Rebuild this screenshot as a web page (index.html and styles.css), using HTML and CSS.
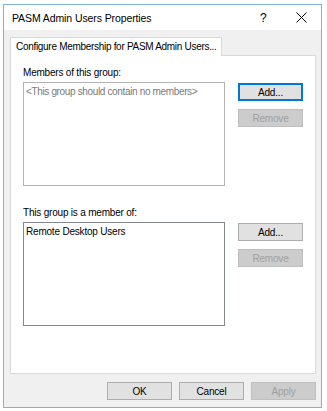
FILE: index.html
```html
<!DOCTYPE html>
<html>
<head>
<meta charset="utf-8">
<link rel="stylesheet" href="styles.css">
</head>
<body>
<div class="window">
  <div class="titlebar">
    <span class="title">PASM Admin Users Properties</span>
    <span class="help">?</span>
    <span class="close"><svg width="11" height="11" viewBox="0 0 11 11"><path d="M0.5 0.5 L10.5 10.5 M10.5 0.5 L0.5 10.5" stroke="#000" stroke-width="1" fill="none"/></svg></span>
  </div>
  <div class="body">
    <div class="tabs"><div class="tab">Configure Membership for PASM Admin Users...</div></div>
    <div class="panel">
      <div class="section">
        <div class="listcol">
          <div class="label">Members of this group:</div>
          <div class="listbox light"><div class="placeholder">&lt;This group should contain no members&gt;</div></div>
        </div>
        <div class="btncol">
          <div class="btn focused">Add...</div>
          <div class="btn disabled">Remove</div>
        </div>
      </div>
      <div class="section second">
        <div class="listcol">
          <div class="label">This group is a member of:</div>
          <div class="listbox dark"><div class="item">Remote Desktop Users</div></div>
        </div>
        <div class="btncol">
          <div class="btn">Add...</div>
          <div class="btn disabled">Remove</div>
        </div>
      </div>
    </div>
    <div class="footer">
      <div class="btn">OK</div>
      <div class="btn">Cancel</div>
      <div class="btn disabled">Apply</div>
    </div>
  </div>
</div>
</body>
</html>
```
FILE: styles.css
```css
html, body {
  margin: 0;
  padding: 0;
  background: #ffffff;
}
body {
  padding: 4px 0 0 3px;
  font-family: "Liberation Sans", Arial, sans-serif;
  font-size: 10px;
  letter-spacing: -0.2px;
  color: #000;
}
.window {
  width: 317px;
  height: 402px;
  border: 1px solid #7fb3de;
  display: flex;
  flex-direction: column;
  background: #f0f0f0;
}
.titlebar {
  height: 25px;
  background: #ffffff;
  display: flex;
  align-items: center;
  padding-left: 8px;
  box-sizing: border-box;
}
.title {
  font-size: 10.5px;
  letter-spacing: -0.1px;
  flex: 1;
}
.help {
  font-size: 12px;
  width: 10px;
  margin-right: 26px;
}
.close {
  width: 11px;
  height: 11px;
  margin-right: 14px;
  display: flex;
}
.body {
  flex: 1;
  display: flex;
  flex-direction: column;
  padding: 7px 5px 7px 6px;
}
.tabs {
  display: flex;
  position: relative;
  z-index: 1;
  margin-bottom: -1px;
}
.tab {
  height: 19px;
  box-sizing: border-box;
  border: 1px solid #d9d9d9;
  border-bottom: none;
  background: #fff;
  padding: 3px 6px 0 5px;
  width: 212px;
  white-space: nowrap;
  letter-spacing: -0.3px;
}
.panel {
  height: 319px;
  box-sizing: border-box;
  border: 1px solid #d9d9d9;
  background: #fff;
  padding: 10px 0 0 12px;
}
.section {
  display: flex;
  gap: 13px;
}
.section.second {
  margin-top: 20px;
}
.listcol {
  display: flex;
  flex-direction: column;
}
.label {
  height: 13px;
  line-height: 13px;
  margin-bottom: 3px;
  white-space: nowrap;
}
.listbox {
  width: 202px;
  height: 104px;
  box-sizing: border-box;
  border: 1px solid #b4b4b4;
  padding: 2px 2px;
  line-height: 13px;
  white-space: nowrap;
}
.listbox.dark {
  border-color: #828790;
}
.placeholder {
  color: #7a7a7a;
  letter-spacing: -0.35px;
}
.btncol {
  display: flex;
  flex-direction: column;
  gap: 8px;
  padding-top: 17px;
}
.btn {
  width: 65px;
  height: 18px;
  box-sizing: border-box;
  border: 1px solid #adadad;
  background: #e1e1e1;
  display: flex;
  align-items: center;
  justify-content: center;
}
.btn.focused {
  border: 2px solid #0078d7;
}
.btn.disabled {
  background: #cccccc;
  border-color: #bfbfbf;
  color: #a0a0a0;
}
.footer {
  display: flex;
  justify-content: flex-end;
  gap: 7px;
  margin-top: 8px;
}
```
